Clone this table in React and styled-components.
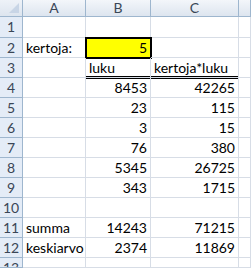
import styled, { createGlobalStyle } from "styled-components";

const GlobalStyle = createGlobalStyle`
  html, body {
    margin: 0;
    padding: 0;
    background: #fff;
    overflow: hidden;
  }
`;

const rows = [
  { n: 1 },
  { n: 2, a: "kertoja:", b: "5", yellow: true },
  { n: 3, b: "luku", c: "kertoja*luku", textRow: true },
  { n: 4, b: "8453", c: "42265" },
  { n: 5, b: "23", c: "115" },
  { n: 6, b: "3", c: "15" },
  { n: 7, b: "76", c: "380" },
  { n: 8, b: "5345", c: "26725" },
  { n: 9, b: "343", c: "1715" },
  { n: 10 },
  { n: 11, a: "summa", b: "14243", c: "71215" },
  { n: 12, a: "keskiarvo", b: "2374", c: "11869" },
  { n: 13 },
];

const Sheet = () => (
  <Grid>
    <Corner>
      <svg width="22" height="16" viewBox="0 0 22 16">
        <polygon points="19,3 19,13 9,13" fill="#c8d5e6" />
      </svg>
    </Corner>
    <ColHead>A</ColHead>
    <ColHead>B</ColHead>
    <ColHead>C</ColHead>
    <ColHead />
    {rows.map((r) => (
      <Row key={r.n} r={r} />
    ))}
  </Grid>
);

const Row = ({ r }) => (
  <>
    <RowHead>{r.n}</RowHead>
    <Cell>{r.a}</Cell>
    <Cell $num={!r.textRow} $yellow={r.yellow} $underline={r.textRow}>
      {r.b}
    </Cell>
    <Cell $num={!r.textRow} $underline={r.textRow}>
      {r.c}
    </Cell>
    <Cell />
  </>
);

export default function App() {
  return (
    <>
      <GlobalStyle />
      <Sheet />
    </>
  );
}

const Grid = styled.div`
  display: grid;
  grid-template-columns: 23px 63px 65px 88px 12px;
  grid-template-rows: 17px 21px repeat(11, 20px) 10px;
  width: 251px;
  height: 268px;
  overflow: hidden;
  font-family: Lato, "Liberation Sans", sans-serif;
  font-size: 14px;
  color: #000;
`;

const Corner = styled.div`
  background: linear-gradient(#eef2f8, #dde5ef);
  border-right: 1px solid #9eb6ce;
  border-bottom: 1px solid #9eb6ce;
  box-sizing: border-box;
  display: flex;
`;

const ColHead = styled.div`
  background: linear-gradient(#f3f6fa, #dde5ef);
  border-right: 1px solid #9eb6ce;
  border-bottom: 1px solid #9eb6ce;
  box-sizing: border-box;
  display: flex;
  align-items: center;
  justify-content: center;
  color: #3a4656;
  font-size: 14px;
  line-height: 1;
`;

const RowHead = styled.div`
  background: #e4ecf7;
  border-right: 1px solid #9eb6ce;
  border-bottom: 1px solid #9eb6ce;
  box-sizing: border-box;
  display: flex;
  justify-content: center;
  padding-top: 3px;
  overflow: hidden;
  color: #3a4656;
  font-size: 14px;
  line-height: 1;
`;

const Cell = styled.div`
  border-right: 1px solid #d7dde6;
  border-bottom: 1px solid #d7dde6;
  box-sizing: border-box;
  display: flex;
  align-items: flex-end;
  justify-content: ${(p) => (p.$num ? "flex-end" : "flex-start")};
  padding: 0 3px 2px 3px;
  line-height: 1;
  white-space: nowrap;
  background: ${(p) => (p.$yellow ? "#ffff00" : "transparent")};
  outline: ${(p) => (p.$yellow ? "2px solid #000" : "none")};
  outline-offset: -1px;
  box-shadow: ${(p) => (p.$underline ? "0 1px 0 #000, inset 0 -1px 0 #000" : "none")};
`;
